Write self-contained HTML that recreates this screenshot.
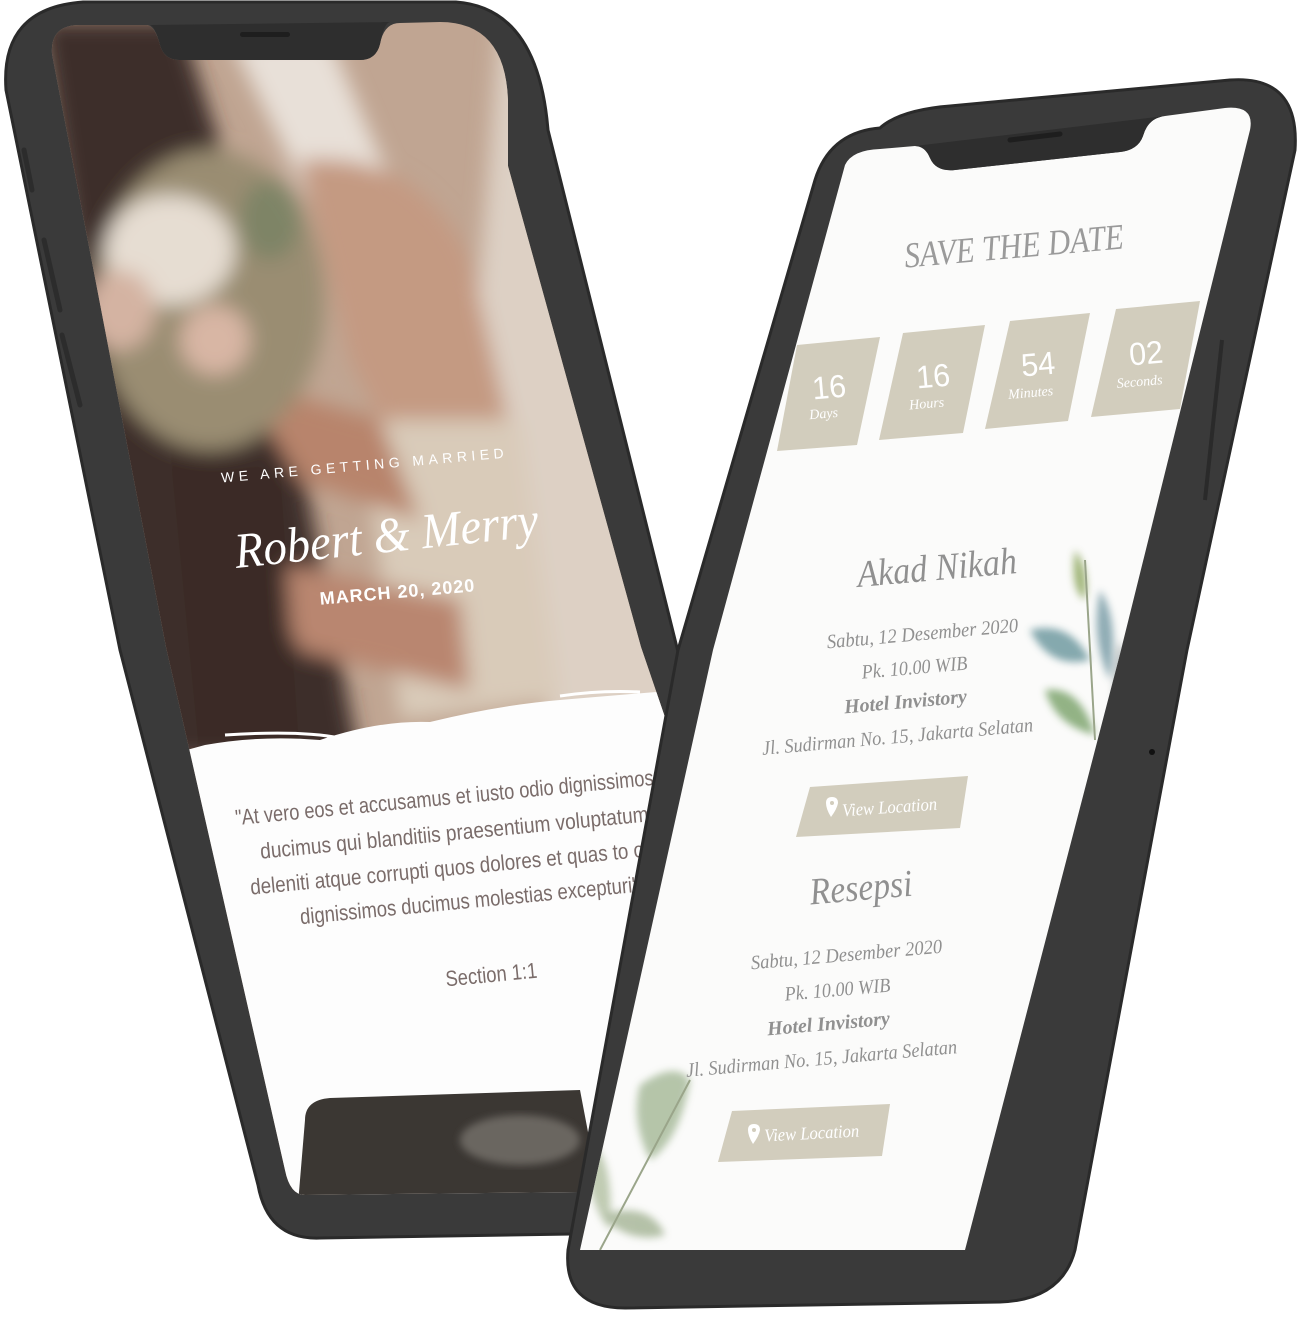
<!DOCTYPE html>
<html><head><meta charset="utf-8"><style>
html,body{margin:0;padding:0;background:#fff;}
svg{display:block}
.sf{font-family:"Liberation Serif","DejaVu Serif",serif;font-style:italic;}
.ss{font-family:"Liberation Sans",sans-serif;}
</style></head><body>
<svg width="1298" height="1325" viewBox="0 0 1298 1325" xmlns="http://www.w3.org/2000/svg">
<defs>
<filter id="bl" x="-20%" y="-20%" width="140%" height="140%"><feGaussianBlur stdDeviation="10"/></filter>
<filter id="bl2"><feGaussianBlur stdDeviation="4"/></filter>
<clipPath id="ls"><path d="M52,54 Q50,25 80,25 L147,25 Q155,26 160,45 Q164,60 180,60 L360,60 Q376,60 380,44 Q384,23 400,23 L440,22 Q505,22 508,100 L508,166 L641,647 L700,820 L760,1190 L305,1195 Q290,1195 285,1170 L166,647 Z"/></clipPath>
<clipPath id="rs"><path d="M845,165 Q852,150 880,149 L915,146 Q925,146 930,158 Q936,172 955,170 L1120,152 Q1138,150 1143,136 Q1148,118 1165,116 L1225,108 Q1255,105 1250,130 L1121,650 L965,1250 L580,1250 L713,650 Z"/></clipPath>
</defs>

<!-- LEFT PHONE FRAME -->
<path d="M83,2 L456,2 Q538,8 548,130 L705,760 L760,1180 Q762,1230 700,1232 L320,1238 Q268,1240 258,1185 L120,650 L6,90 Q0,8 83,2 Z" fill="#3a3a3a" stroke="#2a2a2a" stroke-width="3"/>
<path d="M24,150 L32,190 M44,240 L60,310 M62,335 L80,405" stroke="#2c2c2c" stroke-width="5" stroke-linecap="round"/>

<!-- LEFT SCREEN -->
<g clip-path="url(#ls)">
<rect x="0" y="0" width="800" height="1300" fill="#c0a592"/>
<g filter="url(#bl)">
<path d="M500,20 L800,20 L800,760 L560,760 L470,400 Z" fill="#ddd0c4"/>
<path d="M40,20 L180,20 L270,300 L360,760 L150,760 Z" fill="#3d2f29"/>
<path d="M230,40 L330,40 L420,250 L360,300 Z" fill="#e8e0d8"/>
<path d="M300,160 Q420,150 470,260 L520,470 L430,520 L350,360 Z" fill="#c49a82"/>
<path d="M360,420 L520,420 L560,700 L400,720 Z" fill="#d9cbb9"/>
<path d="M240,380 L380,420 L420,520 L300,480 Z" fill="#b8846c"/>
<path d="M260,560 L460,600 L470,690 L300,650 Z" fill="#b98670"/>
<ellipse cx="210" cy="300" rx="115" ry="150" fill="#9a8d72"/>
<ellipse cx="170" cy="250" rx="65" ry="55" fill="#e6ddd2"/>
<ellipse cx="215" cy="340" rx="35" ry="35" fill="#d8b6a4"/>
<ellipse cx="120" cy="310" rx="35" ry="40" fill="#d4b3a2"/>
<ellipse cx="270" cy="220" rx="30" ry="40" fill="#7e8466"/>
<path d="M170,450 L280,470 L300,760 L200,760 Z" fill="#3a2c26"/>
</g>
<path d="M150,760 L205,745 Q260,735 320,740 Q380,720 430,722 Q500,705 560,700 Q620,695 680,690 L800,690 L800,1300 L150,1300 Z" fill="#fdfdfd"/>
<path d="M225,735 Q300,730 340,738 M560,696 Q600,690 640,692" stroke="#fff" stroke-width="3" fill="none"/>
<path d="M305,1120 Q305,1100 330,1098 L580,1090 L620,1300 L290,1300 Z" fill="#3b3733"/>
<ellipse cx="520" cy="1140" rx="60" ry="25" fill="#6b6660" filter="url(#bl2)"/>
</g>
<path d="M150,25 L390,22 Q384,23 380,44 Q376,60 360,60 L180,60 Q164,60 160,45 Q155,26 150,25 Z" fill="#2e2e2e"/>
<rect x="240" y="32" width="50" height="5" rx="2.5" fill="#1e1e1e"/>

<!-- left texts -->
<g fill="#fff">
<text x="365" y="470" transform="rotate(-5 365 470)" text-anchor="middle" font-family="Liberation Sans,sans-serif" font-size="14" letter-spacing="4.5">WE ARE GETTING MARRIED</text>
<text x="388" y="552" transform="rotate(-6 388 552)" text-anchor="middle" class="sf" font-size="50" textLength="305" lengthAdjust="spacingAndGlyphs">Robert &amp; Merry</text>
<text x="398" y="598" transform="rotate(-5 398 598)" text-anchor="middle" font-family="Liberation Sans,sans-serif" font-weight="bold" font-size="18" letter-spacing="1">MARCH 20, 2020</text>
</g>
<g class="ss" fill="#7a6c6a" font-size="22" text-anchor="middle" lengthAdjust="spacingAndGlyphs">
<text x="445" y="805" transform="rotate(-5.5 445 805)" textLength="420" lengthAdjust="spacingAndGlyphs">"At vero eos et accusamus et iusto odio dignissimos</text>
<text x="455" y="840" transform="rotate(-5.5 455 840)" textLength="390" lengthAdjust="spacingAndGlyphs">ducimus qui blanditiis praesentium voluptatum</text>
<text x="455" y="875" transform="rotate(-5.5 455 875)" textLength="410" lengthAdjust="spacingAndGlyphs">deleniti atque corrupti quos dolores et quas to odi</text>
<text x="470" y="908" transform="rotate(-5.5 470 908)" textLength="340" lengthAdjust="spacingAndGlyphs">dignissimos ducimus molestias excepturi"</text>
<text x="492" y="982" transform="rotate(-5.5 492 982)" textLength="92" lengthAdjust="spacingAndGlyphs">Section 1:1</text>
</g>

<!-- RIGHT PHONE FRAME -->
<path d="M880,128 Q900,110 950,106 L1230,80 Q1300,75 1295,150 L1187,650 L1075,1250 Q1062,1300 1000,1302 L625,1308 Q563,1308 568,1250 L678,650 L815,180 Q830,132 880,128 Z" fill="#3a3a3a" stroke="#2a2a2a" stroke-width="3"/>
<path d="M1222,340 L1205,500" stroke="#2a2a2a" stroke-width="4"/>
<circle cx="1152" cy="752" r="3" fill="#111"/>

<!-- RIGHT SCREEN -->
<g clip-path="url(#rs)">
<rect x="560" y="100" width="720" height="1160" fill="#fbfbfa"/>
<rect x="560" y="1250" width="420" height="30" fill="#2e2e2e"/>
<g filter="url(#bl2)" opacity="0.85">
<path d="M1075,550 Q1090,570 1085,600 Q1070,590 1075,550 Z" fill="#8fa860"/>
<path d="M1030,630 Q1070,620 1090,660 Q1050,670 1030,630 Z" fill="#6f9aa0"/>
<path d="M1100,590 Q1120,620 1110,680 Q1090,640 1100,590 Z" fill="#7c9ea8"/>
<path d="M1045,690 Q1080,685 1095,735 Q1055,725 1045,690 Z" fill="#7fa56f"/>
<path d="M1120,640 Q1135,680 1120,740 Q1108,690 1120,640 Z" fill="#a8b0b0"/>
<path d="M640,1085 Q675,1060 690,1080 Q680,1140 650,1160 Q630,1120 640,1085 Z" fill="#a9bc9c"/>
<path d="M585,1140 Q615,1150 610,1230 Q585,1200 585,1140 Z" fill="#b5c2a6"/>
<path d="M600,1215 Q650,1200 665,1235 Q630,1245 600,1215 Z" fill="#a8b79a"/>
</g>
<path d="M1085,560 L1095,740 M690,1080 L600,1250" stroke="#9aa58a" stroke-width="2" fill="none"/>
</g>
<path d="M915,146 L1165,116 Q1148,118 1143,136 Q1138,150 1120,152 L955,170 Q936,172 930,158 Q925,146 915,146 Z" fill="#2e2e2e"/>
<path d="M1010,140 L1060,134" stroke="#1e1e1e" stroke-width="5" stroke-linecap="round"/>

<text x="1015" y="258" transform="rotate(-5 1015 258)" text-anchor="middle" class="sf" font-size="36" fill="#9a9a9a" textLength="220" lengthAdjust="spacingAndGlyphs">SAVE THE DATE</text>
<g fill="#d2cdbd">
<path d="M797,345 L880,337 L857,445 L777,451 Z"/>
<path d="M903,333 L985,325 L963,433 L879,440 Z"/>
<path d="M1010,321 L1090,313 L1068,421 L985,429 Z"/>
<path d="M1116,309 L1200,301 L1180,409 L1091,417 Z"/>
</g>
<g fill="#fff" text-anchor="middle">
<text x="830" y="398" transform="rotate(-5 830 398)" font-family="Liberation Sans,sans-serif" font-size="32" textLength="34" lengthAdjust="spacingAndGlyphs">16</text>
<text x="824" y="418" transform="rotate(-5 824 418)" class="sf" font-size="14">Days</text>
<text x="934" y="387" transform="rotate(-5 934 387)" font-family="Liberation Sans,sans-serif" font-size="32" textLength="34" lengthAdjust="spacingAndGlyphs">16</text>
<text x="927" y="408" transform="rotate(-5 927 408)" class="sf" font-size="14">Hours</text>
<text x="1039" y="375" transform="rotate(-5 1039 375)" font-family="Liberation Sans,sans-serif" font-size="32" textLength="34" lengthAdjust="spacingAndGlyphs">54</text>
<text x="1031" y="397" transform="rotate(-5 1031 397)" class="sf" font-size="14">Minutes</text>
<text x="1147" y="364" transform="rotate(-5 1147 364)" font-family="Liberation Sans,sans-serif" font-size="32" textLength="34" lengthAdjust="spacingAndGlyphs">02</text>
<text x="1140" y="386" transform="rotate(-5 1140 386)" class="sf" font-size="14">Seconds</text>
</g>
<g class="sf" fill="#909090" text-anchor="middle">
<text x="938" y="580" transform="rotate(-5 938 580)" font-size="38" textLength="160" lengthAdjust="spacingAndGlyphs">Akad Nikah</text>
<text x="923" y="640" transform="rotate(-5 923 640)" font-size="20" textLength="192" lengthAdjust="spacingAndGlyphs">Sabtu, 12 Desember 2020</text>
<text x="915" y="674" transform="rotate(-5 915 674)" font-size="20" textLength="106" lengthAdjust="spacingAndGlyphs">Pk. 10.00 WIB</text>
<text x="906" y="708" transform="rotate(-5 906 708)" font-size="20" font-weight="bold" textLength="123" lengthAdjust="spacingAndGlyphs">Hotel Invistory</text>
<text x="898" y="743" transform="rotate(-5 898 743)" font-size="20" textLength="272" lengthAdjust="spacingAndGlyphs">Jl. Sudirman No. 15, Jakarta Selatan</text>
<text x="862" y="900" transform="rotate(-5 862 900)" font-size="38" textLength="103" lengthAdjust="spacingAndGlyphs">Resepsi</text>
<text x="847" y="961" transform="rotate(-5 847 961)" font-size="20" textLength="192" lengthAdjust="spacingAndGlyphs">Sabtu, 12 Desember 2020</text>
<text x="838" y="996" transform="rotate(-5 838 996)" font-size="20" textLength="106" lengthAdjust="spacingAndGlyphs">Pk. 10.00 WIB</text>
<text x="829" y="1030" transform="rotate(-5 829 1030)" font-size="20" font-weight="bold" textLength="123" lengthAdjust="spacingAndGlyphs">Hotel Invistory</text>
<text x="822" y="1065" transform="rotate(-5 822 1065)" font-size="20" textLength="272" lengthAdjust="spacingAndGlyphs">Jl. Sudirman No. 15, Jakarta Selatan</text>
</g>
<g fill="#d2cdbd">
<path d="M810,787 L968,776 L960,828 L796,837 Z"/>
<path d="M732,1111 L890,1104 L882,1156 L718,1162 Z"/>
</g>
<g fill="#fff">
<path d="M832,797 Q826,797 826,803 Q826,809 831,817 Q837,809 838,803 Q838,797 832,797 Z"/>
<path d="M754,1124 Q748,1124 748,1130 Q748,1136 753,1144 Q759,1136 760,1130 Q760,1124 754,1124 Z"/>
<text x="890" y="813" transform="rotate(-4 890 813)" text-anchor="middle" class="sf" font-style="italic" font-size="18" textLength="95" lengthAdjust="spacingAndGlyphs">View Location</text>
<text x="812" y="1139" transform="rotate(-3 812 1139)" text-anchor="middle" class="sf" font-size="18" textLength="95" lengthAdjust="spacingAndGlyphs">View Location</text>
</g>
<circle cx="832" cy="803" r="2" fill="#d2cdbd"/>
<circle cx="754" cy="1130" r="2" fill="#d2cdbd"/>
</svg>
</body></html>
